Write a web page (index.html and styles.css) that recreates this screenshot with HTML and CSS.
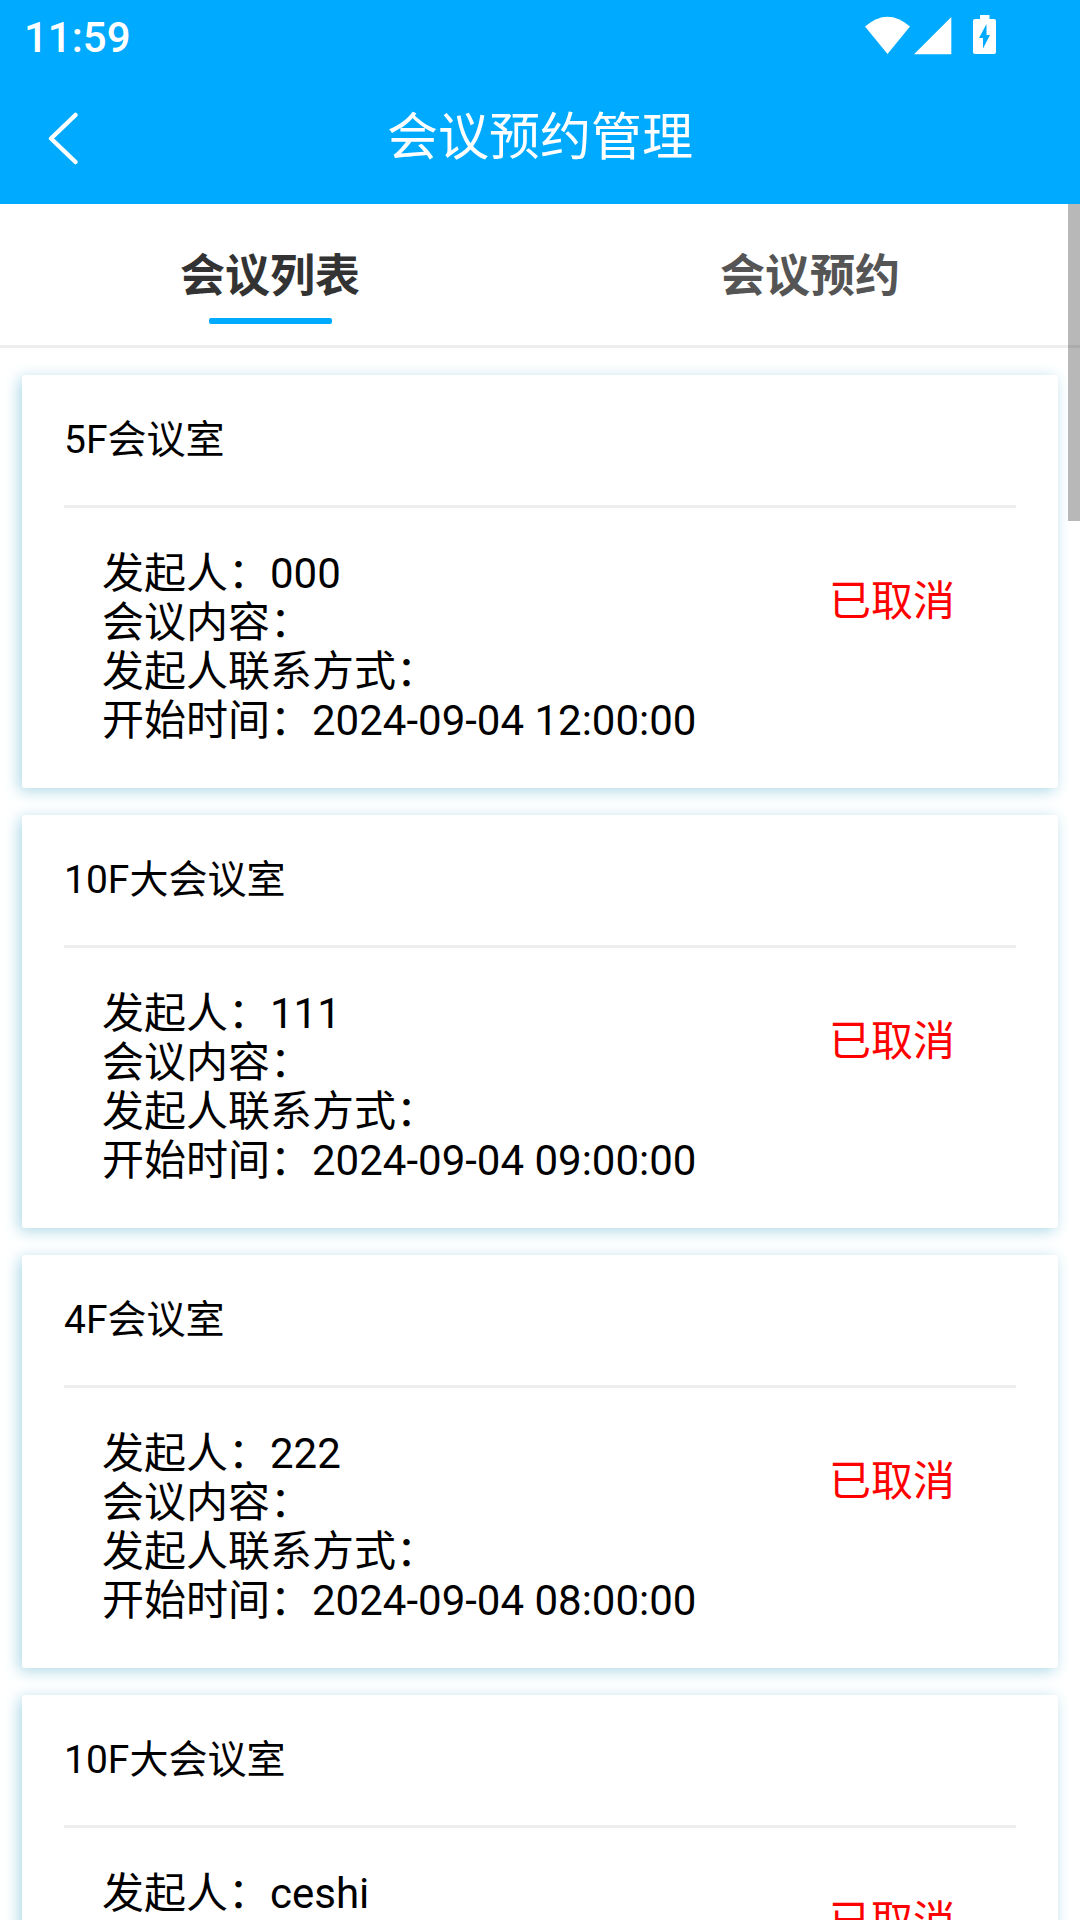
FILE: index.html
```
<!DOCTYPE html>
<html lang="zh-CN">
<head>
  <meta charset="UTF-8">
  <meta name="viewport" content="width=device-width, initial-scale=1.0">
  <title>会议预约管理</title>
  <link rel="stylesheet" href="styles.css">
</head>
<body>
  <header class="header">
    <div class="status-bar">
      <span class="time">11:59</span>
      <svg class="status-icons" width="110" height="42" viewBox="0 0 110 42" fill="#fff">
        <path d="M0 12.500Q22.500 -7 45 12.500L22.500 40Z"/>
        <path d="M49 40.300L86.300 3V40.300Z"/>
        <path fill-rule="evenodd" d="M115 1h9.500v4h4.500q2 0 2 2v31q0 2-2 2h-19q-2 0-2-2V7q0-2 2-2h5zM121.500 10l-7.500 14h4v10.500l7-13.500h-3.500z"/>
      </svg>
    </div>
    <div class="nav-bar">
      <svg class="back" width="34" height="56" viewBox="0 0 34 56">
        <path d="M28.500 5L4 28.500L28.500 52" fill="none" stroke="#fff" stroke-width="4.500" stroke-linecap="round" stroke-linejoin="round"/>
      </svg>
      <h1>会议预约管理</h1>
    </div>
  </header>

  <nav class="tabs">
    <div class="tab active">会议列表</div>
    <div class="tab">会议预约</div>
  </nav>

  <main class="list">
    <div class="card">
      <div class="card-title">5F会议室</div>
      <div class="card-body">
        <div class="info">
          <p>发起人：000</p>
          <p>会议内容：</p>
          <p>发起人联系方式：</p>
          <p>开始时间：2024-09-04 12:00:00</p>
        </div>
        <div class="state">已取消</div>
      </div>
    </div>

    <div class="card">
      <div class="card-title">10F大会议室</div>
      <div class="card-body">
        <div class="info">
          <p>发起人：111</p>
          <p>会议内容：</p>
          <p>发起人联系方式：</p>
          <p>开始时间：2024-09-04 09:00:00</p>
        </div>
        <div class="state">已取消</div>
      </div>
    </div>

    <div class="card">
      <div class="card-title">4F会议室</div>
      <div class="card-body">
        <div class="info">
          <p>发起人：222</p>
          <p>会议内容：</p>
          <p>发起人联系方式：</p>
          <p>开始时间：2024-09-04 08:00:00</p>
        </div>
        <div class="state">已取消</div>
      </div>
    </div>

    <div class="card">
      <div class="card-title">10F大会议室</div>
      <div class="card-body">
        <div class="info">
          <p>发起人：ceshi</p>
        </div>
        <div class="state">已取消</div>
      </div>
    </div>
  </main>

  <div class="scroll-thumb"></div>
</body>
</html>
```
FILE: styles.css
```
* {
  box-sizing: border-box;
}

html {
  overflow: hidden;
}

body {
  display: flex;
  flex-direction: column;
  margin: 0;
  height: 1920px;
  overflow: hidden;
  background-color: #fff;
  color: #000;
  font-family: Roboto, "Noto Sans CJK SC", sans-serif;
}

h1,
p {
  margin: 0;
}

/* Header */
.header {
  flex: none;
  height: 204px;
  background-color: #00aaff;
  color: #fff;
}

.status-bar {
  display: flex;
  justify-content: space-between;
  height: 72px;
  padding: 14px 105px 0 24px;
}

.time {
  font-size: 42px;
  font-weight: 500;
  line-height: 48px;
}

.status-icons {
  overflow: visible;
}

.nav-bar {
  display: grid;
  grid-template-columns: 100px 1fr 100px;
  height: 132px;
  align-items: center;
}

.back {
  margin: 0 0 0 47px;
}

.nav-bar h1 {
  font-size: 51px;
  font-weight: 400;
  line-height: 60px;
  text-align: center;
}

/* Tabs */
.tabs {
  flex: none;
  display: flex;
  height: 144px;
  border-bottom: 3px solid #eee;
}

.tab {
  flex: 1;
  display: flex;
  flex-direction: column;
  align-items: center;
  padding-top: 41px;
  font-size: 45px;
  font-weight: 700;
  line-height: 63px;
  color: #555;
}

.tab.active {
  color: #333;
}

.tab.active::after {
  content: "";
  width: 123px;
  height: 6px;
  margin-top: 10px;
  border-radius: 2px;
  background-color: #00aaff;
}

/* Meeting list */
.list {
  flex: 1;
  min-height: 0;
  overflow: hidden;
  display: flex;
  flex-direction: column;
  gap: 27px;
  padding: 27px 22px 0;
}

.card {
  flex: none;
  height: 413px;
  padding: 0 42px;
  border-radius: 3px;
  background-color: #fff;
  box-shadow: -3px 3px 15px lightblue;
}

.card-title {
  height: 133px;
  border-bottom: 3px solid #eee;
  font-size: 39px;
  line-height: 130px;
}

.card-body {
  display: flex;
  justify-content: space-between;
  padding: 41px 61px 0 38px;
  font-size: 42px;
  line-height: 49px;
}

.info p {
  height: 49px;
  white-space: nowrap;
}

.state {
  padding-top: 28px;
  color: #f00;
}

.scroll-thumb {
  position: absolute;
  top: 204px;
  right: 0;
  width: 12px;
  height: 317px;
  background-color: rgba(0, 0, 0, 0.28);
}
```
